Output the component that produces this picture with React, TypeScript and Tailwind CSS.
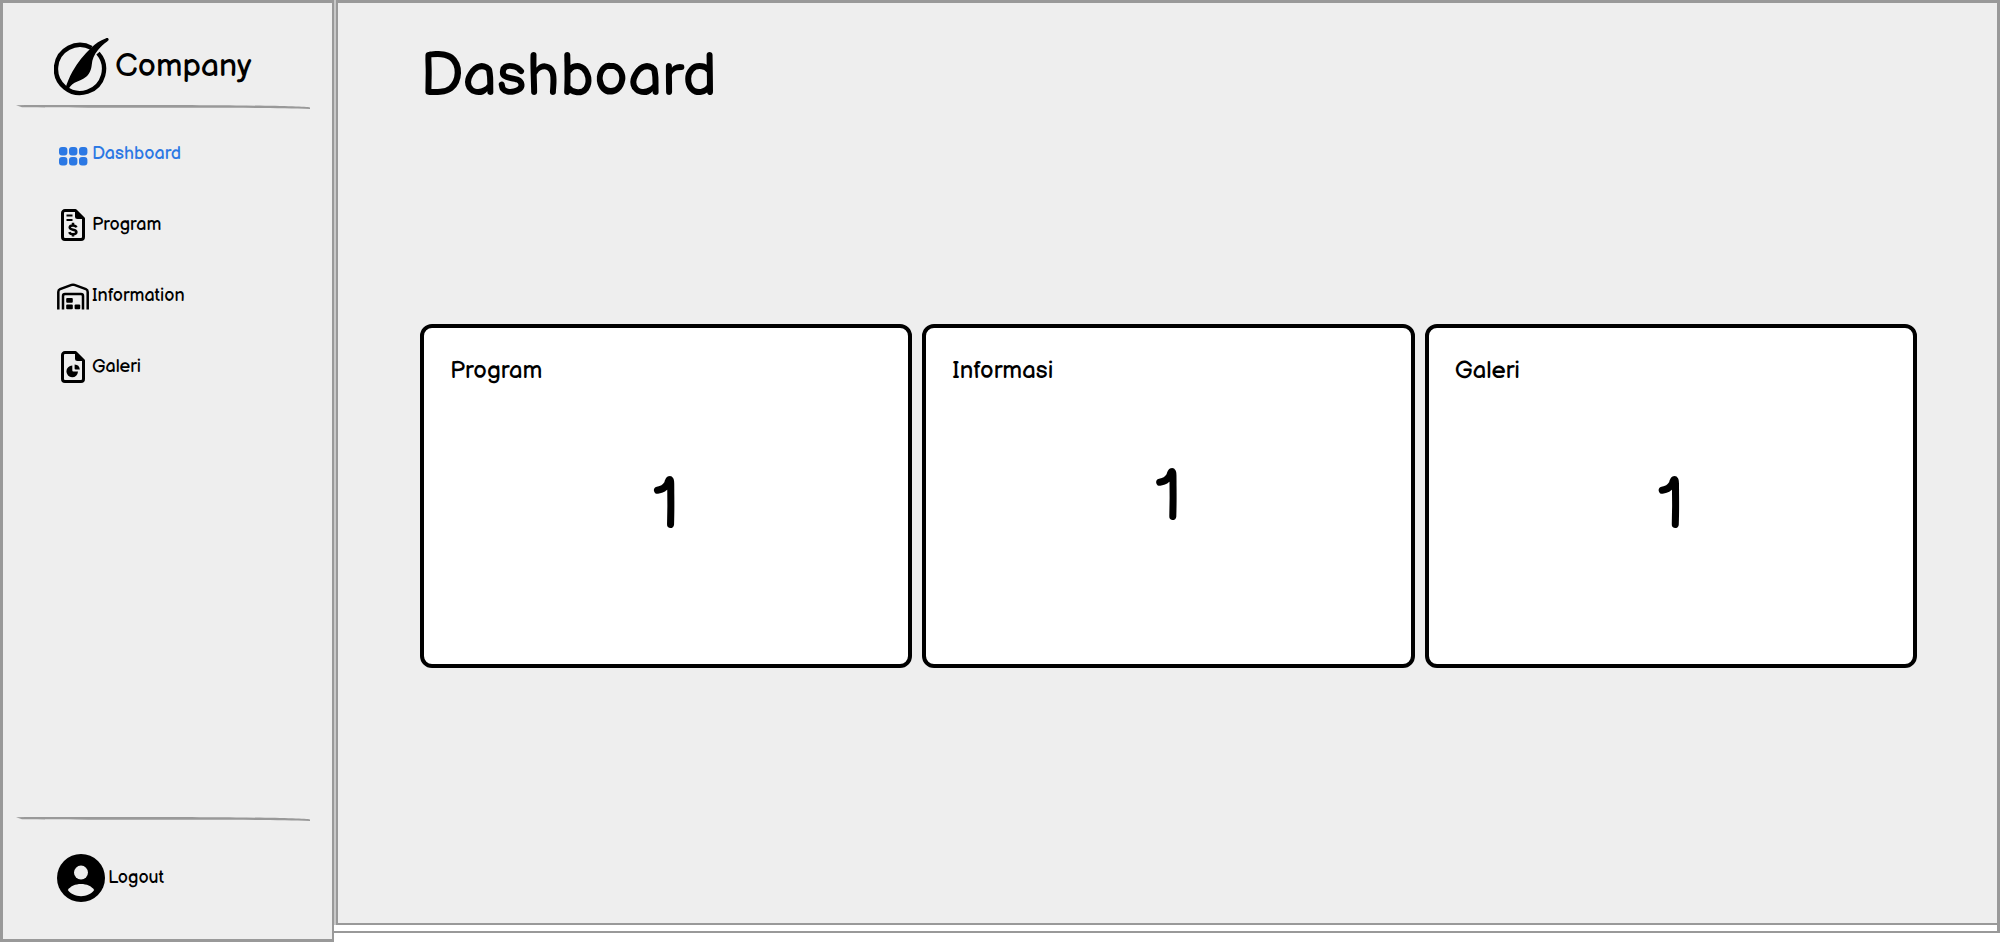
import type { ReactNode } from 'react';

type IconProps = { className?: string };

function LogoIcon() {
  return (
    <svg className="h-[58px] w-14 shrink-0" viewBox="54 38 56 58" aria-hidden="true">
      <path d="M98 53.1A24 24 0 1 1 91.5 47.9" fill="none" stroke="currentColor" strokeWidth="4.4" />
      <path
        d="M108.6 39.2C108.4 38 107.2 37.8 105.6 38.4C100 40.4 95.5 43.4 91.5 47.4C84 54.5 77.5 62.5 72.5 71.5C69.5 77 67.2 82.5 65.6 87.6L67.6 90.2C69.8 87.2 71.2 84.8 74.6 82.8C78.2 80.8 82.4 80.2 86.2 76.8C90.2 73 91.2 69.2 91.8 64.4C92.2 59.6 94 54.8 98 50C101 46.4 103.8 43.6 107.2 41.4C108.4 40.6 108.8 40 108.6 39.2Z"
        fill="currentColor"
      />
    </svg>
  );
}

function GridIcon({ className }: IconProps) {
  return (
    <svg className={className} viewBox="0 0 32 32" fill="currentColor" aria-hidden="true">
      {[2, 12, 22].map((x) =>
        [9, 19].map((y) => <rect key={`${x}-${y}`} x={x} y={y} width="8.4" height="8.4" rx="3" />),
      )}
    </svg>
  );
}

function PageOutline() {
  return (
    <>
      <path
        d="M18.5 1.5H8A2.5 2.5 0 0 0 5.5 4V28A2.5 2.5 0 0 0 8 30.5H24A2.5 2.5 0 0 0 26.5 28V9.5Z"
        fill="none"
        stroke="currentColor"
        strokeWidth="3"
        strokeLinejoin="round"
      />
      <path d="M18 1L27.5 10H20.5A2.5 2.5 0 0 1 18 7.5Z" fill="currentColor" />
    </>
  );
}

function InvoiceIcon({ className }: IconProps) {
  return (
    <svg className={className} viewBox="0 0 32 32" aria-hidden="true">
      <PageOutline />
      <g fill="none" stroke="currentColor" strokeWidth="2">
        <path d="M9.5 6.5H15.5M9.5 11H15.5" />
        <path
          d="M19.4 18.4C18.9 17.1 17.6 16.4 16 16.4C14.1 16.4 12.7 17.2 12.7 18.6C12.7 20 14.1 20.3 16 20.7C18 21.1 19.4 21.6 19.4 23C19.4 24.5 18 25.2 16 25.2C14.1 25.2 12.8 24.5 12.3 23.1M16 13.8V16.5M16 25V27.6"
          strokeWidth="2.5"
        />
      </g>
    </svg>
  );
}

function WarehouseIcon({ className }: IconProps) {
  return (
    <svg className={className} viewBox="0 0 32 32" aria-hidden="true">
      <g fill="none" stroke="currentColor" strokeWidth="2.5" strokeLinejoin="round">
        <path d="M1.3 29.4V12Q1.3 9.9 3.1 9.2L14.6 4.9Q16 4.4 17.4 4.9L28.9 9.2Q30.7 9.9 30.7 12V29.4" />
        <path d="M6 29.4V16Q6 14 8 14H24Q26 14 26 16V29.4" />
      </g>
      <g fill="currentColor">
        <rect x="9.2" y="18" width="6.6" height="4.8" rx="1" />
        <rect x="9.2" y="24.4" width="6.6" height="4.8" rx="1" />
        <rect x="17.6" y="24.4" width="5.6" height="4.8" rx="1" />
      </g>
    </svg>
  );
}

function ReportIcon({ className }: IconProps) {
  return (
    <svg className={className} viewBox="0 0 32 32" fill="currentColor" aria-hidden="true">
      <PageOutline />
      <path d="M15.3 14.6A5.8 5.8 0 1 0 21 20.6H16.3A1 1 0 0 1 15.3 19.6Z" />
      <path d="M17.6 13.4A5.4 5.4 0 0 1 22.8 18.4H18.6A1 1 0 0 1 17.6 17.4Z" />
    </svg>
  );
}

function AvatarIcon() {
  return (
    <svg className="size-12 shrink-0" viewBox="0 0 48 48" aria-hidden="true">
      <circle cx="24" cy="24" r="24" fill="#000" />
      <circle cx="24" cy="18.6" r="7" fill="#eee" />
      <path d="M10.8 36C13.5 32 18.5 30 24 30S34.5 32 37.2 36C34.2 40 29.4 42.2 24 42.2S13.8 40 10.8 36Z" fill="#eee" />
    </svg>
  );
}

function Divider() {
  return (
    <svg className="block h-1 w-full" viewBox="0 0 294 4" preserveAspectRatio="none" aria-hidden="true">
      <path d="M0 .2C60 0 160 0 220 .4C260 .8 290 1.6 294 2.4V4C270 3.2 230 2.8 190 2.8C120 2.8 40 2.6 6 2.2Z" fill="#999" />
    </svg>
  );
}

const links: { label: string; icon: ReactNode; active?: boolean }[] = [
  { label: 'Dashboard', icon: <GridIcon className="size-8" />, active: true },
  { label: 'Program', icon: <InvoiceIcon className="size-8" /> },
  { label: 'Information', icon: <WarehouseIcon className="size-8" /> },
  { label: 'Galeri', icon: <ReportIcon className="size-8" /> },
];

const cards = [
  { title: 'Program', value: 1, place: 'pt-21' },
  { title: 'Informasi', value: 1, place: 'pt-19' },
  { title: 'Galeri', value: 1, place: 'pt-21' },
];

function Sidebar() {
  return (
    <aside className="flex min-h-screen w-[334px] shrink-0 flex-col border-3 border-r-2 border-[#999] bg-[#eee] pr-[22px] pl-[13px]">
      <div className="flex items-center gap-[5px] pt-[35px] pb-[9px] pl-[38px]">
        <LogoIcon />
        <span className="text-[32px] leading-10">Company</span>
      </div>
      <Divider />
      <nav className="flex flex-1 flex-col gap-[39px] pt-[29px] pl-[41px]">
        {links.map(({ label, icon, active }) => (
          <a
            key={label}
            href="#"
            aria-current={active ? 'page' : undefined}
            className={`flex h-8 items-center gap-[3px] text-lg ${active ? 'text-[#2b78e4]' : 'text-black'}`}
          >
            {icon}
            {label}
          </a>
        ))}
      </nav>
      <Divider />
      <button type="button" className="flex items-center gap-[3px] pt-[33px] pb-[37px] pl-[41px] text-lg">
        <AvatarIcon />
        Logout
      </button>
    </aside>
  );
}

export default function App() {
  return (
    <div className="flex min-h-screen bg-white font-['Balsamiq_Sans','Liberation_Sans',sans-serif] text-black">
      <Sidebar />
      <div className="mb-[9px] flex min-w-0 flex-1 flex-col border-r-3 border-b-2 border-[#999] pb-[6px]">
        <main className="ml-[2px] flex-1 border-t-3 border-b-2 border-l-2 border-[#999] bg-[#eee] pr-20 pl-[82px] shadow-[-2px_0_#c8c8c8]">
          <h1 className="pt-[38px] text-[60px] leading-[72px]">Dashboard</h1>
          <div className="grid grid-cols-3 gap-[10px] pt-[211px]">
            {cards.map(({ title, value, place }) => (
              <section key={title} className="h-[344px] rounded-xl border-4 border-black bg-white px-[26px] pt-[27px]">
                <h2 className="text-2xl">{title}</h2>
                <p className={`text-center text-7xl ${place}`}>{value}</p>
              </section>
            ))}
          </div>
        </main>
      </div>
    </div>
  );
}
